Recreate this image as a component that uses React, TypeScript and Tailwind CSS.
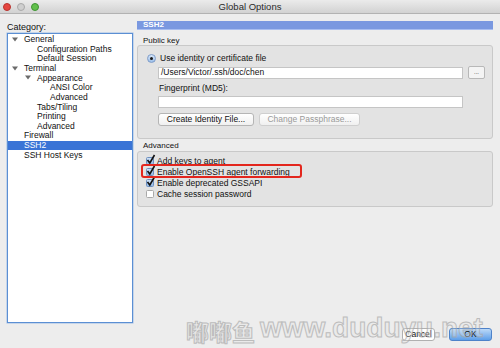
import React from 'react';

type Node = { label: string; level: number; open?: boolean; selected?: boolean };

const tree: Node[] = [
    { label: 'General', level: 0, open: true },
    { label: 'Configuration Paths', level: 1 },
    { label: 'Default Session', level: 1 },
    { label: 'Terminal', level: 0, open: true },
    { label: 'Appearance', level: 1, open: true },
    { label: 'ANSI Color', level: 2 },
    { label: 'Advanced', level: 2 },
    { label: 'Tabs/Tiling', level: 1 },
    { label: 'Printing', level: 1 },
    { label: 'Advanced', level: 1 },
    { label: 'Firewall', level: 0 },
    { label: 'SSH2', level: 0, selected: true },
    { label: 'SSH Host Keys', level: 0 },
];

const indent = ['pl-[16px]', 'pl-[29px]', 'pl-[42px]'];
const arrowPos = ['pl-[4px]', 'pl-[17px]', 'pl-[30px]'];

const Arrow = () => (
    <svg width="6" height="5" viewBox="0 0 6 5" className="shrink-0">
        <path d="M0 0.5 L6 0.5 L3 4.5 Z" fill="#6b6b6b" />
    </svg>
);

const Check = ({ checked }: { checked: boolean }) => (
    <div className="relative w-[8px] h-[8px] shrink-0">
        <div
            className={`w-[8px] h-[8px] rounded-[1.5px] border ${checked
                ? 'border-[#6d8fbf] bg-gradient-to-b from-[#cfe2f7] to-[#8fb7e6]'
                : 'border-[#a9a9a9] bg-white'
                }`}
        />
        {checked && (
            <svg width="10" height="11" viewBox="0 0 10 11" className="absolute left-[0px] top-[-3px]">
                <path d="M1.5 6 L3.8 9 L8.5 1" stroke="#111" strokeWidth="1.6" fill="none" />
            </svg>
        )}
    </div>
);

const Btn = ({ children, disabled, className }: { children: React.ReactNode; disabled?: boolean; className: string }) => (
    <div
        className={`h-[13px] flex items-center justify-center rounded-[3px] border border-[#b5b5b5] bg-gradient-to-b from-white to-[#f0f0f0] ${disabled ? 'text-[#9a9a9a] border-[#cfcfcf]' : 'text-[#111]'} ${className}`}
    >
        {children}
    </div>
);

const App: React.FC = () => {
    return (
        <div className="w-[500px] h-[348px] bg-[#ededed] flex flex-col text-[8.5px] leading-none text-[#111] overflow-hidden relative [font-family:'Liberation_Sans',Arial,sans-serif]">
            {/* title bar */}
            <div className="h-[14px] shrink-0 flex items-center relative bg-gradient-to-b from-[#ebebeb] to-[#d2d2d2] border-b border-[#b2b2b2]">
                <div className="flex gap-[6px] pl-[3px]">
                    <div className="w-[8px] h-[8px] rounded-full bg-[#e5463f] border border-[#b8332e]" />
                    <div className="w-[8px] h-[8px] rounded-full bg-[#cfcfcf] border border-[#a9a9a9]" />
                    <div className="w-[8px] h-[8px] rounded-full bg-[#62c04c] border border-[#3f9433]" />
                </div>
                <div className="absolute inset-0 flex items-center justify-center text-[9.5px] text-[#2a2a2a]">Global Options</div>
            </div>

            <div className="flex flex-1 min-h-0">
                {/* left */}
                <div className="w-[126px] ml-[7px] flex flex-col">
                    <div className="h-[19px] flex items-end pb-[1px] text-[9px]">Category:</div>
                    <div className="h-[290px] border border-[#5b8fd3] bg-white pt-[0.5px] shadow-[0_0_0_0.5px_#9dbde8]">
                        {tree.map((n, i) => (
                            <div
                                key={i}
                                className={`h-[9.65px] flex items-center relative ${n.selected ? 'bg-[#3a74d6] text-white' : ''}`}
                            >
                                {n.open && (
                                    <div className={`absolute left-0 top-0 h-full flex items-center ${arrowPos[n.level]}`}>
                                        <Arrow />
                                    </div>
                                )}
                                <span className={indent[n.level]}>{n.label}</span>
                            </div>
                        ))}
                    </div>
                </div>

                {/* right */}
                <div className="w-[356px] ml-[4px] flex flex-col">
                    <div className="mt-[7px] h-[9px] bg-[#7a98e0] border-b border-[#a8bdf0] text-white font-bold text-[8px] flex items-center pl-[6px]">
                        SSH2
                    </div>

                    <div className="mt-[7px] h-[8px] pl-[6px] flex items-center text-[8px]">Public key</div>
                    <div className="h-[94px] rounded-[3px] border border-[#c9c9c9] bg-[#e3e3e3] flex flex-col pl-[9px]">
                        <div className="mt-[8px] flex items-center gap-[4px]">
                            <div className="w-[9px] h-[9px] rounded-full border border-[#7e9cc9] bg-gradient-to-b from-[#d7e6f8] to-[#9cbfea] flex items-center justify-center">
                                <div className="w-[3px] h-[3px] rounded-full bg-[#1a1a1a]" />
                            </div>
                            <span>Use identity or certificate file</span>
                        </div>
                        <div className="mt-[3px] flex items-center gap-[5px]">
                            <div className="ml-[11px] w-[305px] h-[12px] bg-white border border-[#c5c5c5] flex items-center pl-[2px]">
                                /Users/Victor/.ssh/doc/chen
                            </div>
                            <div className="w-[17px] h-[13px] rounded-[2px] border border-[#b8b8b8] bg-[#f4f4f4] flex items-center justify-center text-[6px] pb-[2px]">...</div>
                        </div>
                        <div className="mt-[5px] ml-[12px]">Fingerprint (MD5):</div>
                        <div className="mt-[3px] ml-[11px] w-[305px] h-[12px] bg-white border border-[#c5c5c5]" />
                        <div className="mt-[5px] ml-[11px] flex gap-[5px]">
                            <Btn className="w-[96px]">Create Identity File...</Btn>
                            <Btn className="w-[101px]" disabled>Change Passphrase...</Btn>
                        </div>
                    </div>

                    <div className="mt-[3px] h-[8px] pl-[6px] flex items-center text-[8px]">Advanced</div>
                    <div className="mt-[1px] h-[56px] rounded-[3px] border border-[#c9c9c9] bg-[#e3e3e3] flex flex-col pl-[8px] pt-[5px] gap-[3px] relative">
                        {[
                            ['Add keys to agent', true],
                            ['Enable OpenSSH agent forwarding', true],
                            ['Enable deprecated GSSAPI', true],
                            ['Cache session password', false],
                        ].map(([label, c], i) => (
                            <div key={i} className="h-[8px] flex items-center gap-[3px]">
                                <Check checked={c as boolean} />
                                <span>{label as string}</span>
                            </div>
                        ))}
                        <div className="absolute left-[3px] top-[12px] w-[161px] h-[14px] border-2 border-[#e3261d] rounded-[3px]" />
                    </div>

                    <div className="flex-1" />
                    <div className="mb-[7px] flex justify-end gap-[14px] pr-[1px]">
                        <div className="w-[33px] h-[13px] rounded-[3px] border border-[#b0b0b0] bg-white flex items-center justify-center">Cancel</div>
                        <div className="w-[43px] h-[13px] rounded-[3px] border border-[#4d82c9] bg-gradient-to-b from-[#bcd9f7] to-[#5d9ee8] flex items-center justify-center">OK</div>
                    </div>
                </div>
            </div>

            {/* watermark */}
            <div className="absolute left-[186px] top-[312px] flex items-end gap-[5px] font-bold text-[#e4e4e4]/40 opacity-70 [-webkit-text-stroke:1px_#a8a8a8] pointer-events-none">
                <span className="text-[23px] [font-family:'Noto_Sans_CJK_SC',sans-serif]">嘟嘟鱼</span>
                <span className="text-[28px] leading-[31px] [font-family:'Liberation_Sans',Arial,sans-serif]">www.duduyu.net</span>
            </div>
        </div>
    );
};

export default App;
